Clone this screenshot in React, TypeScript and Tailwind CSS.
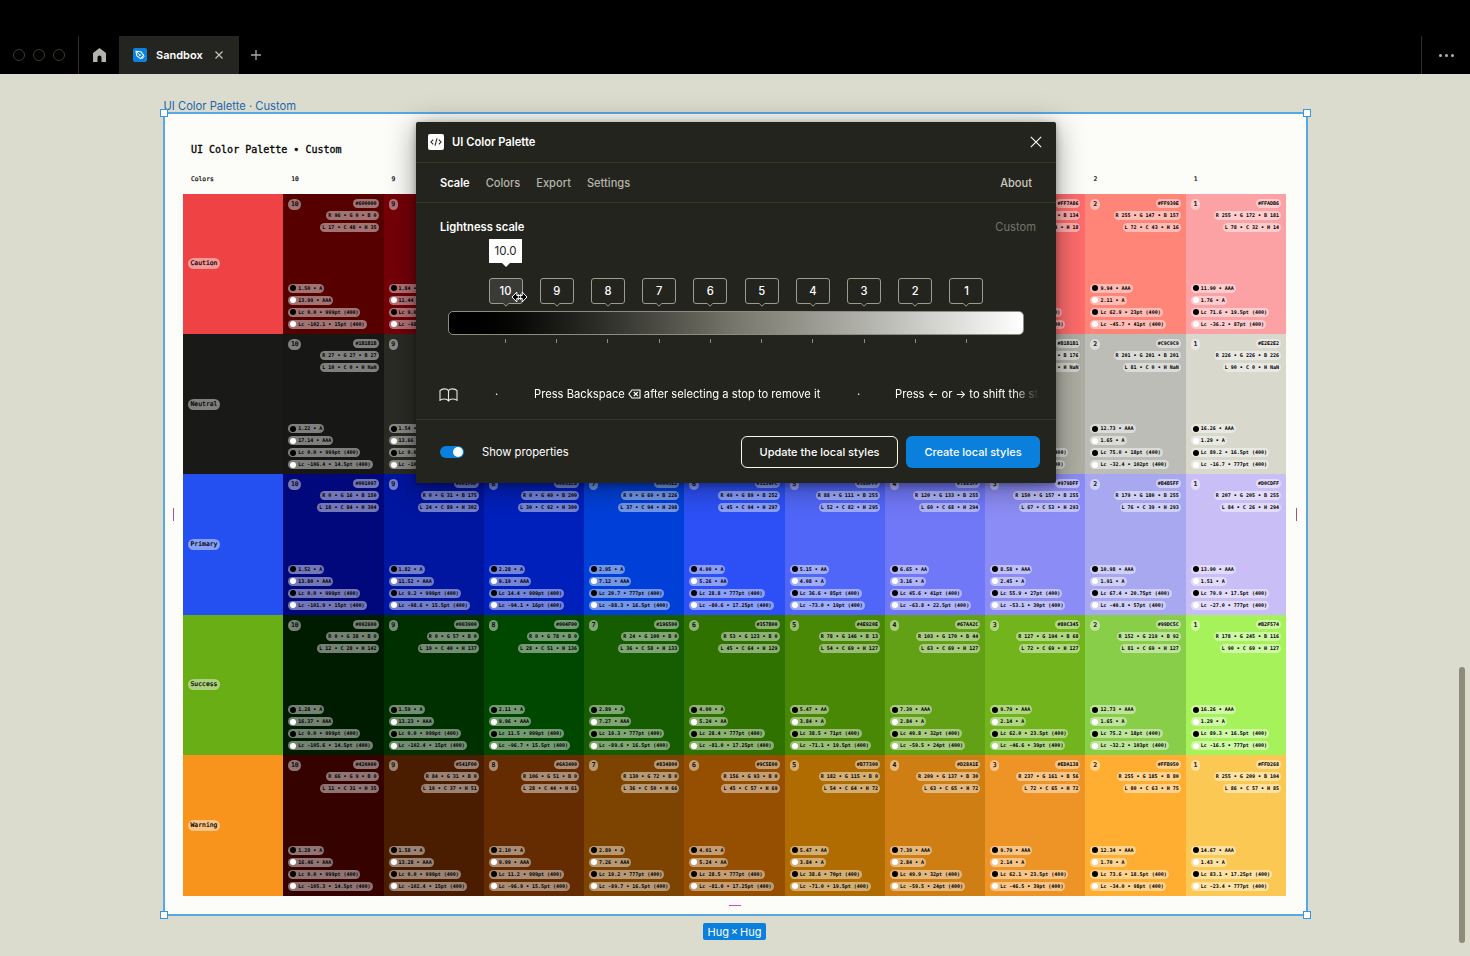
import React from "react";

type Stop = {
  name: string;
  bg: string;
  hex?: string;
  rgb?: string;
  lch?: string;
  notes?: string[];
};

type Row = { name: string; base: string; stops: Stop[] };

const stop = (line: string): Stop => {
  const [name, bg, hex, rgb, lch, dark, light, lcDark, lcLight] = line.split("|");
  if (!hex) return { name, bg };
  const [r, g, b] = rgb.split(" ");
  const [l, c, h] = lch.split(" ");
  const lc = (v: string) => {
    const [value, size] = v.split(" ");
    return `Lc ${value} • ${size}pt (400)`;
  };
  return {
    name,
    bg,
    hex,
    rgb: `R ${r} • G ${g} • B ${b}`,
    lch: `L ${l} • C ${c} • H ${h}`,
    notes: [dark.replace(" ", " • "), light.replace(" ", " • "), lc(lcDark), lc(lcLight)],
  };
};

const ROWS: Row[] = [
  {
    name: "Caution",
    base: "#ee4244",
    stops: [
      "10|#560000|#600000|96 0 0|17 48 35|1.50 A|13.99 AAA|0.0 999|-102.1 15",
      "9|#740008|#7A0010|122 0 16|25 53 34|1.84 A|11.44 AAA|9.0 999|-98.4 15.5",
      "8|#95001c",
      "7|#b1122c",
      "6|#cc2f40",
      "5|#e84856",
      "4|#ff616f",
      "3|#ff6c6c|#FF7A86|255 122 134|66 54 18|8.16 AAA|2.57 A|53.9 28|-55.2 28",
      "2|#ff8578|#FF939E|255 147 157|72 43 16|9.94 AAA|2.11 A|62.9 23|-45.7 41",
      "1|#fda2a4|#FFADB6|255 172 181|78 32 14|11.90 AAA|1.76 A|71.6 19.5|-36.2 87",
    ].map(stop),
  },
  {
    name: "Neutral",
    base: "#191917",
    stops: [
      "10|#171715|#1B1B1B|27 27 27|10 0 NaN|1.22 A|17.14 AAA|0.0 999|-106.4 14.5",
      "9|#2b2b26|#303030|48 48 48|19 0 NaN|1.54 A|13.66 AAA|0.0 999|-102.9 15",
      "8|#434343",
      "7|#565656",
      "6|#6b6b6b",
      "5|#828282",
      "4|#999999",
      "3|#aeaea4|#B1B1B1|176 176 176|72 0 NaN|9.79 AAA|2.14 A|62.0 23.5|-46.6 39",
      "2|#bdbdb8|#C9C9C9|201 201 201|81 0 NaN|12.73 AAA|1.65 A|75.0 18|-32.4 102",
      "1|#d8d8cc|#E2E2E2|226 226 226|90 0 NaN|16.26 AAA|1.29 A|89.2 16.5|-16.7 777",
    ].map(stop),
  },
  {
    name: "Primary",
    base: "#2450f2",
    stops: [
      "10|#00087c|#001097|0 16 150|18 84 304|1.52 A|13.80 AAA|0.0 999|-101.9 15",
      "9|#0015a0|#001FAF|0 31 175|24 89 302|1.82 A|11.52 AAA|9.2 999|-98.6 15.5",
      "8|#0020bc|#0031C8|0 49 200|30 92 300|2.28 A|9.19 AAA|14.4 999|-94.1 16",
      "7|#0040d8|#0045E2|0 69 226|37 94 298|2.95 A|7.12 AAA|20.7 777|-88.3 16.5",
      "6|#2c50f6|#3159FC|49 89 252|45 94 297|4.00 A|5.26 AA|28.8 777|-80.6 17.25",
      "5|#5066f8|#586FFF|88 111 255|52 82 295|5.15 AA|4.08 A|36.6 85|-73.0 19",
      "4|#7078f8|#7885FF|120 133 255|60 68 294|6.65 AA|3.16 A|45.6 41|-63.8 22.5",
      "3|#8c8cf6|#979DFF|150 157 255|67 53 293|8.58 AAA|2.45 A|55.9 27|-53.1 30",
      "2|#a8a8f0|#B4B5FF|179 180 255|76 39 293|10.98 AAA|1.91 A|67.4 20.75|-40.8 57",
      "1|#cabef6|#D0CDFF|207 205 255|84 26 294|13.90 AAA|1.51 A|79.9 17.5|-27.0 777",
    ].map(stop),
  },
  {
    name: "Success",
    base: "#68ae14",
    stops: [
      "10|#001c00|#002600|0 38 0|12 28 142|1.28 A|16.37 AAA|0.0 999|-105.6 14.5",
      "9|#003000|#003900|0 57 0|19 40 137|1.59 A|13.23 AAA|0.0 999|-102.4 15",
      "8|#004800|#004F00|0 78 0|28 51 136|2.11 A|9.96 AAA|11.5 999|-96.7 15.5",
      "7|#165c00|#196500|24 100 0|36 58 133|2.89 A|7.27 AAA|19.3 777|-89.6 16.5",
      "6|#2f7200|#357B00|53 123 0|45 64 129|4.00 A|5.24 AA|28.4 777|-81.0 17.25",
      "5|#488804|#4E920E|78 146 13|54 69 127|5.47 AA|3.84 A|38.5 71|-71.1 19.5",
      "4|#62a016|#67AA2C|103 170 44|63 69 127|7.39 AAA|2.84 A|49.8 32|-59.5 24",
      "3|#72b41c|#80C345|127 194 68|72 69 127|9.79 AAA|2.14 A|62.0 23.5|-46.6 39",
      "2|#88ce48|#99DC5C|152 219 92|81 69 127|12.73 AAA|1.65 A|75.2 18|-32.2 103",
      "1|#a6f25a|#B2F574|178 245 116|90 69 127|16.26 AAA|1.29 A|89.3 16.5|-16.5 777",
    ].map(stop),
  },
  {
    name: "Warning",
    base: "#f8941c",
    stops: [
      "10|#360200|#420A00|66 9 0|11 31 35|1.28 A|16.46 AAA|0.0 999|-105.3 14.5",
      "9|#4a1c00|#541F00|84 31 0|19 37 51|1.58 A|13.28 AAA|0.0 999|-102.4 15",
      "8|#642c00|#6A3400|106 51 0|28 44 61|2.10 A|9.99 AAA|11.2 999|-96.9 15.5",
      "7|#7c4400|#834800|130 72 0|36 50 66|2.89 A|7.26 AAA|19.2 777|-89.7 16.5",
      "6|#964e00|#9C5E00|156 93 0|45 57 69|4.01 A|5.24 AA|28.5 777|-81.0 17.25",
      "5|#b06c00|#B77300|182 115 0|54 64 72|5.47 AA|3.84 A|38.6 70|-71.0 19.5",
      "4|#ce7e12|#D28A1E|209 137 30|63 65 72|7.39 AAA|2.84 A|49.9 32|-59.5 24",
      "3|#ee9426|#EDA138|237 161 56|72 65 72|9.79 AAA|2.14 A|62.1 23.5|-46.5 39",
      "2|#ffae32|#FFB950|255 185 80|80 63 75|12.34 AAA|1.70 A|73.6 18.5|-34.0 98",
      "1|#fcc854|#FFD268|255 209 104|86 57 85|14.67 AAA|1.43 A|83.1 17.25|-23.4 777",
    ].map(stop),
  },
];

const LEVELS = ["10", "9", "8", "7", "6", "5", "4", "3", "2", "1"];
const HEADINGS = ["Colors", "10", "9", "", "", "", "", "", "", "2", "1"];

function Pill({ children, dot }: { children: React.ReactNode; dot?: string }) {
  return (
    <div className="flex h-[9px] items-center gap-[2px] rounded-full bg-white/45 px-[2px] text-[5px] leading-[9px] font-bold whitespace-pre text-black">
      {dot && <span className={`size-[6px] shrink-0 rounded-full ${dot}`} />}
      <span>{children}</span>
    </div>
  );
}

function Swatch({ s }: { s: Stop }) {
  return (
    <div className="flex flex-col justify-between p-[5px]" style={{ background: s.bg }}>
      {s.hex && (
        <>
          <div className="flex items-start justify-between">
            <div className="flex h-[11px] shrink-0 items-center rounded-full bg-white/45 px-[2.7px] text-[6.4px] leading-[11px] [-webkit-text-stroke:0.2px_black]">
              {s.name}
            </div>
            <div className="flex shrink-0 flex-col items-end gap-[3px]">
              <Pill>{s.hex}</Pill>
              <Pill>{s.rgb}</Pill>
              <Pill>{s.lch}</Pill>
            </div>
          </div>
          <div className="flex flex-col items-start gap-[3px]">
            {s.notes?.map((n, i) => (
              <Pill key={i} dot={i % 2 ? "bg-white" : "bg-black"}>
                {n}
              </Pill>
            ))}
          </div>
        </>
      )}
    </div>
  );
}

function PaletteFrame() {
  return (
    <div
      className="relative flex h-[804px] w-[1145px] flex-col border-2 border-[#58a8e4] bg-[#fcfcf8] pt-[29px] pl-[18.5px] text-black"
      style={{ fontFamily: '"DejaVu Sans Mono", monospace' }}
    >
      <div className="h-[30px] pl-[8px] text-[10px] leading-[14px] [-webkit-text-stroke:0.3px_black]">
        UI Color Palette • Custom
      </div>
      <div className="grid h-[20.5px] w-[1103px] grid-cols-11 text-[6.3px] leading-[11px] [-webkit-text-stroke:0.2px_black]">
        {HEADINGS.map((l, i) => (
          <div key={i} className="pl-[8px]">
            {l}
          </div>
        ))}
      </div>
      <div className="flex h-[702px] w-[1103px] flex-col">
        {ROWS.map((r) => (
          <div key={r.name} className="grid flex-1 grid-cols-11">
            <div className="flex items-center pl-[5px]" style={{ background: r.base }}>
              <div className="rounded-full bg-white/45 px-[2.5px] text-[6.4px] leading-[11px] [-webkit-text-stroke:0.2px_black]">
                {r.name}
              </div>
            </div>
            {r.stops.map((s) => (
              <Swatch key={s.name} s={s} />
            ))}
          </div>
        ))}
      </div>
      <span className="absolute top-[394px] left-[8px] h-[13px] w-px bg-[#b0509c]" />
      <span className="absolute top-[394px] right-[9px] h-[13px] w-px bg-[#b0506c]" />
      <span className="absolute bottom-[8px] left-[564px] h-px w-[12px] bg-[#e048b8]" />
      <span className="absolute -top-[5px] -left-[5px] size-[8px] border-[1.5px] border-[#3a94de] bg-white" />
      <span className="absolute -top-[5px] -right-[5px] size-[8px] border-[1.5px] border-[#3a94de] bg-white" />
      <span className="absolute -bottom-[5px] -left-[5px] size-[8px] border-[1.5px] border-[#3a94de] bg-white" />
      <span className="absolute -right-[5px] -bottom-[5px] size-[8px] border-[1.5px] border-[#3a94de] bg-white" />
    </div>
  );
}

function TopBar() {
  return (
    <header className="flex h-[74px] items-end bg-black">
      <div className="flex h-[38px] w-full items-stretch">
        <div className="flex w-[79px] items-center gap-[8px] border-r border-[#2e2e26] pl-[13px]">
          {[0, 1, 2].map((i) => (
            <span key={i} className="size-[12px] rounded-full border border-[#3a3a32]" />
          ))}
        </div>
        <div className="flex w-[40px] items-center justify-center">
          <svg width="13" height="14" viewBox="0 0 13 14" fill="#b4b4ac">
            <path d="M6.5 0 L13 5 V14 H8.5 V9.6 a2 2 0 0 0 -4 0 V14 H0 V5 Z" />
          </svg>
        </div>
        <div className="flex w-[120px] items-center bg-[#242420] pl-[14px]">
          <svg width="14" height="14" viewBox="0 0 14 14" fill="none">
            <rect width="14" height="14" rx="2" fill="#0a82e0" />
            <path d="M3 3.2 L7.8 3.7 L10.7 7.4 L7.6 10.6 L3.9 7.9 Z" stroke="#fff" strokeWidth="1.1" strokeLinejoin="round" />
            <path d="M3.2 3.4 L6.4 6.6 M8.6 11 L11.2 8.4" stroke="#fff" strokeWidth="1" />
            <circle cx="6.9" cy="7" r="0.9" fill="#fff" />
          </svg>
          <span className="ml-[9px] text-[11px] font-semibold text-white">Sandbox</span>
          <svg className="mr-[16px] ml-auto" width="8" height="8" viewBox="0 0 8 8" stroke="#c4c4bc" strokeWidth="1.2">
            <path d="M0.5 0.5 L7.5 7.5 M7.5 0.5 L0.5 7.5" />
          </svg>
        </div>
        <div className="flex flex-1 items-center pl-[12px]">
          <svg width="10" height="10" viewBox="0 0 10 10" stroke="#a8a8a0" strokeWidth="1.3">
            <path d="M5 0 V10 M0 5 H10" />
          </svg>
        </div>
        <div className="flex w-[49px] items-center justify-center gap-[3px] border-l border-[#2e2e26]">
          {[0, 1, 2].map((i) => (
            <span key={i} className="size-[3px] rounded-full bg-[#b4b4ac]" />
          ))}
        </div>
      </div>
    </header>
  );
}

function Handle({ label, active }: { label: string; active?: boolean }) {
  return (
    <div className="relative h-[30px] w-[34px]">
      <svg className="absolute inset-0" width="34" height="30" viewBox="0 0 34 30" fill={active ? "#3a3a36" : "none"} stroke="#9c9c8c">
        <path d="M3 0.5 H31 a2.5 2.5 0 0 1 2.5 2.5 V23 a2.5 2.5 0 0 1 -2.5 2.5 H19.8 L17 28.2 L14.2 25.5 H3 a2.5 2.5 0 0 1 -2.5 -2.5 V3 a2.5 2.5 0 0 1 2.5 -2.5 Z" />
      </svg>
      <div className="relative text-center text-[11.2px] leading-[27px] font-medium text-white">{label}</div>
      {active && (
        <>
          <div className="absolute -top-[39px] left-[0.5px] flex h-[24px] w-[33px] items-center justify-center bg-white pt-px text-[11.5px] text-[#24241e]">
            10.0
          </div>
          <svg className="absolute -top-[15px] left-[13px]" width="8" height="4" viewBox="0 0 8 4" fill="#fff">
            <path d="M0 0 H8 L4 4 Z" />
          </svg>
          <svg className="absolute top-[12px] left-[22px] z-10" width="17" height="14" viewBox="0 0 17 14">
            <path
              d="M1 7 L5.8 2 V5.6 H11.2 V2 L16 7 L11.2 12 V8.4 H5.8 V12 Z"
              fill="#000"
              stroke="#fff"
              strokeWidth="1"
              strokeLinejoin="round"
            />
            <path d="M7.4 4 V10 M9.6 4 V10" stroke="#fff" strokeWidth="0.8" />
          </svg>
        </>
      )}
    </div>
  );
}

function Dialog() {
  return (
    <section className="absolute top-[122px] left-[416px] flex h-[361px] w-[640px] flex-col rounded-[2px] bg-[#24241e] text-[11.2px] text-white shadow-[0_4px_30px_rgba(0,0,0,0.4),0_2px_7px_rgba(0,0,0,0.3)]">
      <div className="flex h-[41px] items-center border-b border-[#3a3a18] pr-[14px] pl-[12px]">
        <div className="flex size-[16px] items-center justify-center rounded-[2px] bg-white">
          <svg width="12" height="8" viewBox="0 0 12 8" fill="none" stroke="#24241e" strokeWidth="1.1">
            <path d="M3.2 1.6 L1 4 L3.2 6.4 M8.8 1.6 L11 4 L8.8 6.4 M7 0.4 L5 7.6" />
          </svg>
        </div>
        <span className="ml-[8px] pt-px font-semibold">UI Color Palette</span>
        <svg className="ml-auto" width="12" height="12" viewBox="0 0 12 12" stroke="#fff" strokeWidth="1.1">
          <path d="M0.8 0.8 L11.2 11.2 M11.2 0.8 L0.8 11.2" />
        </svg>
      </div>
      <div className="flex h-[40px] items-center gap-[16px] border-b border-[#3a3a18] px-[24px] pt-[2px] text-[11.1px] font-medium text-[#b4b4ac]">
        <span className="font-semibold text-white">Scale</span>
        <span>Colors</span>
        <span>Export</span>
        <span>Settings</span>
        <span className="ml-auto text-[#c8c8c0]">About</span>
      </div>
      <div className="flex h-[216px] flex-col">
        <div className="flex h-[35px] items-end justify-between pr-[20px] pl-[24px] leading-[22px]">
          <span className="font-semibold">Lightness scale</span>
          <span className="text-[#74746a]">Custom</span>
        </div>
        <div className="mt-[40px] flex h-[33px] justify-between px-[72.5px]">
          {LEVELS.map((l, i) => (
            <Handle key={l} label={l} active={i === 0} />
          ))}
        </div>
        <div className="mx-[32px] h-[24px] rounded-[5px] border border-[#8c8c80] bg-linear-to-r from-black via-[#77776c] to-white" />
        <div className="mt-[4px] flex justify-between px-[89px]">
          {LEVELS.map((l) => (
            <span key={l} className="h-[4px] w-px bg-[#8c8c80]" />
          ))}
        </div>
        <div className="mt-[38px] flex h-[27px] items-center pl-[23px]">
          <svg width="19" height="14" viewBox="0 0 19 14" fill="none" stroke="#e8e8dc" strokeWidth="1.1">
            <path d="M9.5 2.6 C8.6 1.4 7.4 0.9 5.6 0.9 C3.4 0.9 2 1.4 1 2.6 V12.2 C2.4 11.3 3.8 11 5.6 11 C7.4 11 8.6 11.5 9.5 12.9 C10.4 11.5 11.6 11 13.4 11 C15.2 11 16.6 11.3 18 12.2 V2.6 C17 1.4 15.6 0.9 13.4 0.9 C11.6 0.9 10.4 1.4 9.5 2.6 Z M9.5 2.6 V12.6" />
          </svg>
          <div className="ml-[37px] flex w-[544px] items-center overflow-hidden whitespace-nowrap [mask-image:linear-gradient(to_right,black_95%,transparent)]">
            <span className="w-[39px] shrink-0">·</span>
            <span className="flex w-[323px] shrink-0 items-center gap-[3px]">
              <span>Press Backspace</span>
              <svg width="13" height="10" viewBox="0 0 13 10" fill="none" stroke="#fff" strokeWidth="1.1">
                <path d="M4 1 H12 V9 H4 L0.9 5 Z M5.8 3 L9.8 7 M9.8 3 L5.8 7" />
              </svg>
              <span>after selecting a stop to remove it</span>
            </span>
            <span className="w-[38px] shrink-0">·</span>
            <span className="shrink-0">Press ← or → to shift the st</span>
          </div>
        </div>
      </div>
      <div className="flex flex-1 items-center border-t border-[#36363a] pr-[16px] pl-[24px]">
        <div className="flex h-[12px] w-[24px] items-center justify-end rounded-full bg-[#0a80dc] pr-px">
          <span className="size-[10px] rounded-full bg-white" />
        </div>
        <span className="ml-[18px] pt-px">Show properties</span>
        <button className="ml-auto h-[32px] w-[157px] rounded-[6px] border border-[#f8f8e0] pt-px text-[11px] font-medium">
          Update the local styles
        </button>
        <button className="ml-[8px] h-[32px] w-[134px] rounded-[6px] bg-[#0a80dc] pt-px text-[11px] font-medium">
          Create local styles
        </button>
      </div>
    </section>
  );
}

export default function App() {
  return (
    <div
      className="relative flex h-[956px] w-[1470px] flex-col overflow-hidden bg-[#dcdcce]"
      style={{ fontFamily: "Inter, sans-serif" }}
    >
      <TopBar />
      <main className="flex flex-1 flex-col pl-[162.5px]">
        <div className="mt-[23px] h-[15px] pl-px text-[11.2px] leading-[18px] text-[#1c66ac]">
          UI Color Palette · Custom
        </div>
        <PaletteFrame />
        <div className="mt-[7px] ml-[540.5px] flex h-[17px] w-[63px] items-center justify-center rounded-[2px] bg-[#0a80dc] pt-px text-[11px] [word-spacing:-1.2px] text-white">
          Hug × Hug
        </div>
      </main>
      <Dialog />
      <span className="absolute top-[667px] right-[5px] h-[276px] w-[6px] rounded-full bg-[#8c8c78]" />
    </div>
  );
}
